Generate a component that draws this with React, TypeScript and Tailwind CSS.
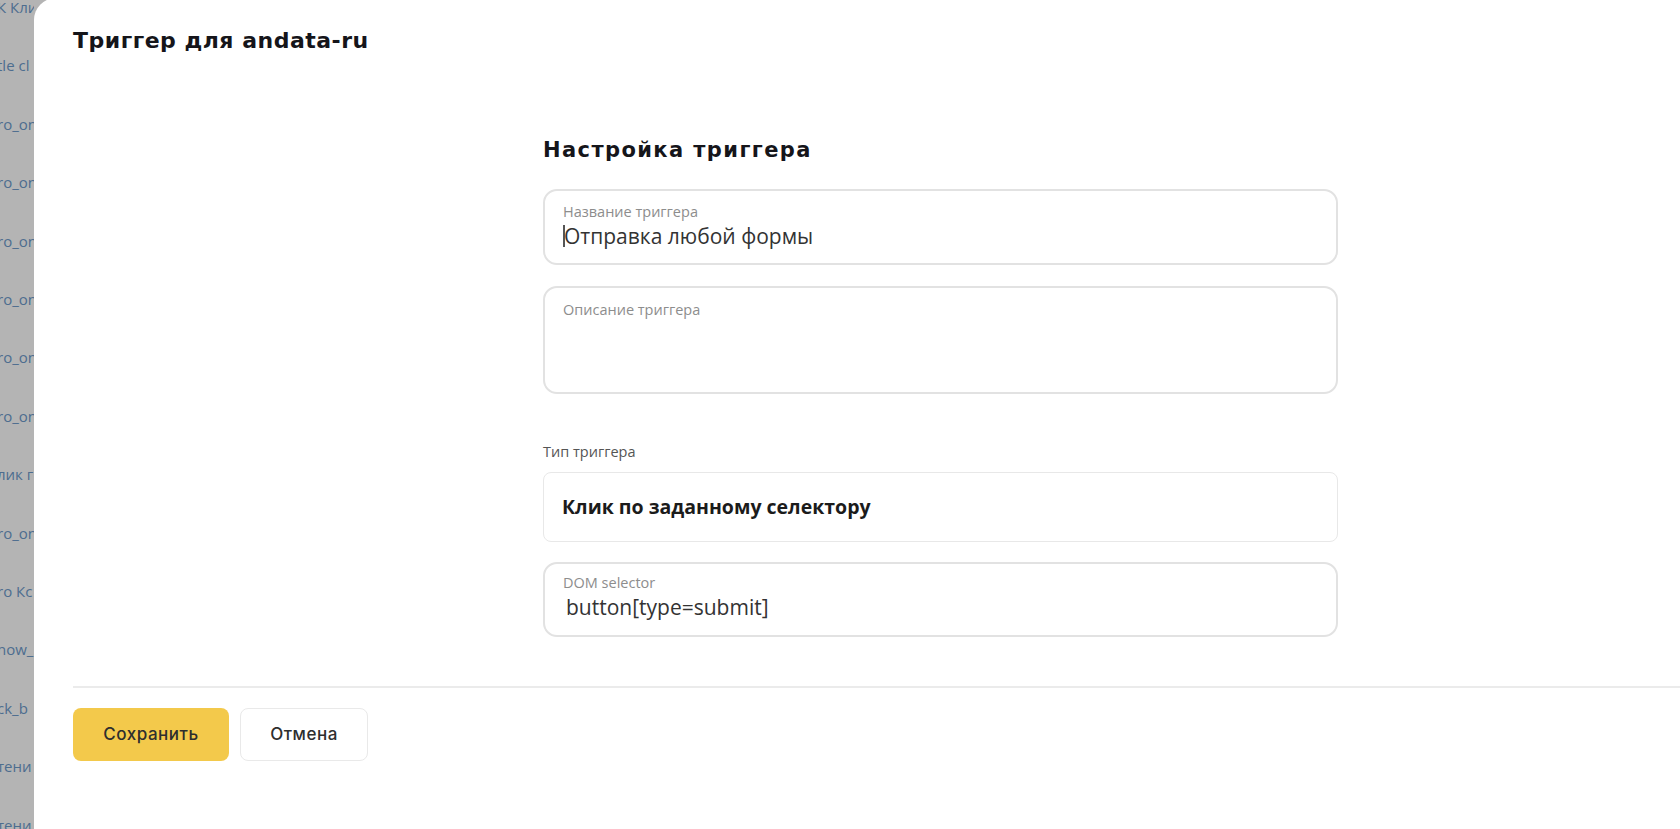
import React from "react";

const listRows = [
  "К Клик",
  "tle cl",
  "ro_on",
  "ro_on",
  "ro_on",
  "ro_on",
  "ro_on",
  "ro_on",
  "лик г",
  "ro_on",
  "ro Кс",
  "now_",
  "ck_b",
  "тени",
  "тени",
];

const heading = { fontFamily: "'DejaVu Sans', Inter, sans-serif" };
const ui = { fontFamily: "Inter, 'Noto Sans', sans-serif" };
const body = { fontFamily: "'Open Sans', 'Noto Sans', sans-serif" };

function TextField({
  label,
  value,
  caret,
  className,
}: {
  label: string;
  value?: string;
  caret?: boolean;
  className: string;
}) {
  return (
    <div
      className={`rounded-[14px] border-2 border-[#e2e2e2] bg-white pl-[18px] pr-4 ${className}`}
      style={body}
    >
      <div className="text-[14.5px] leading-[20px] text-[#8d8d8d]">{label}</div>
      {value !== undefined && (
        <div className="flex items-center text-[21px] leading-[28px] text-[#333]">
          {caret && <span className="mr-[-1px] h-[22px] w-[2px] bg-[#555]" />}
          <span>{value}</span>
        </div>
      )}
    </div>
  );
}

export default function App() {
  return (
    <div className="flex h-[829px] w-full overflow-hidden bg-[#b4b4b4]">
      {/* page underneath the drawer */}
      <aside className="w-[34px] shrink-0 overflow-hidden" style={body}>
        <div className="-mt-[22px]">
          {listRows.map((row, i) => (
            <div
              key={i}
              className="-ml-[3px] whitespace-nowrap text-[15px] leading-[58.4px] text-[#4d6d8f]"
            >
              {row}
            </div>
          ))}
        </div>
      </aside>

      <section className="-mt-[2px] flex h-[831px] flex-1 flex-col rounded-tl-[22px] bg-white">
        <header className="pl-[39px] pt-[29px]">
          <h1
            className="text-[22px] font-bold leading-[28px] tracking-[0.5px] text-[#15151a]"
            style={heading}
          >
            Триггер для andata-ru
          </h1>
        </header>

        <div className="mt-[81px] pl-[509px]">
          <div className="w-[795px]">
            <h2
              className="text-[21px] font-bold leading-[28px] tracking-[1.4px] text-[#15151a]"
              style={heading}
            >
              Настройка триггера
            </h2>

            <TextField
              className="mt-[25px] h-[76px] pt-[11px]"
              label="Название триггера"
              value="Отправка любой формы"
              caret
            />
            <TextField
              className="mt-[21px] h-[108px] pt-[12px]"
              label="Описание триггера"
            />

            <div
              className="mt-[49px] text-[14.5px] leading-[18px] text-[#555]"
              style={body}
            >
              Тип триггера
            </div>
            <div
              className="mt-[11px] flex h-[70px] items-center rounded-[8px] border border-[#e8e8e8] pl-[18px] text-[19.5px] font-bold text-[#1b1b1b]"
              style={body}
            >
              Клик по заданному селектору
            </div>

            <TextField
              className="mt-[20px] h-[75px] pt-[9px] [&>div:last-child]:pl-[3px]"
              label="DOM selector"
              value="button[type=submit]"
            />
          </div>
        </div>

        <footer className="ml-[39px] mt-[49px] border-t-2 border-[#ebebeb] pt-[20px]">
          <div className="flex gap-[11px]" style={ui}>
            <button className="h-[53px] w-[156px] rounded-[8px] bg-[#f3c94b] text-[17px] font-medium tracking-[0.03em] text-[#2e2e2e]">
              Сохранить
            </button>
            <button className="h-[53px] w-[128px] rounded-[8px] border border-[#e9e9e9] bg-white text-[17px] font-medium tracking-[0.03em] text-[#2e2e2e]">
              Отмена
            </button>
          </div>
        </footer>
      </section>
    </div>
  );
}
